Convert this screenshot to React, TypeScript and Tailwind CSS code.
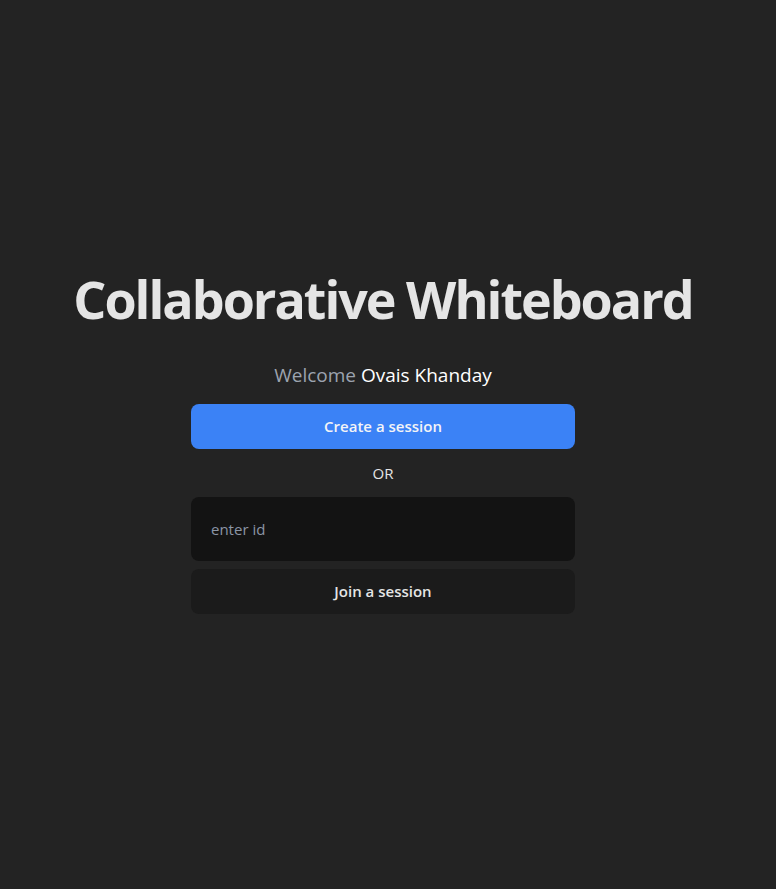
export default function App() {
  return (
    <div className="min-h-screen bg-[#232323] flex flex-col items-center justify-center pr-[10px] pb-[12px] font-['Open_Sans',sans-serif]">
      <h1 className="text-[52px] font-bold text-[#e5e5e5] tracking-[-2px] leading-[72px]">
        Collaborative Whiteboard
      </h1>
      <p className="mt-[26px] text-[19px] leading-[28px] text-[#9ca3af]">
        Welcome <span className="text-white">Ovais Khanday</span>
      </p>
      <div className="mt-[15px] w-96 flex flex-col">
        <button className="h-[45px] rounded-lg bg-[#3b82f6] text-[15px] font-semibold text-[#f3f4f6]">
          Create a session
        </button>
        <p className="my-[12px] text-center text-[15px] leading-[24px] text-[#e5e5e5]">OR</p>
        <input
          placeholder="enter id"
          className="h-16 rounded-lg bg-[#131313] px-5 text-[15px] text-white placeholder:text-[#8b95a5] outline-none"
        />
        <button className="mt-2 h-[45px] rounded-lg bg-[#1b1b1b] text-[15px] font-semibold text-[#e5e5e5]">
          Join a session
        </button>
      </div>
    </div>
  );
}
